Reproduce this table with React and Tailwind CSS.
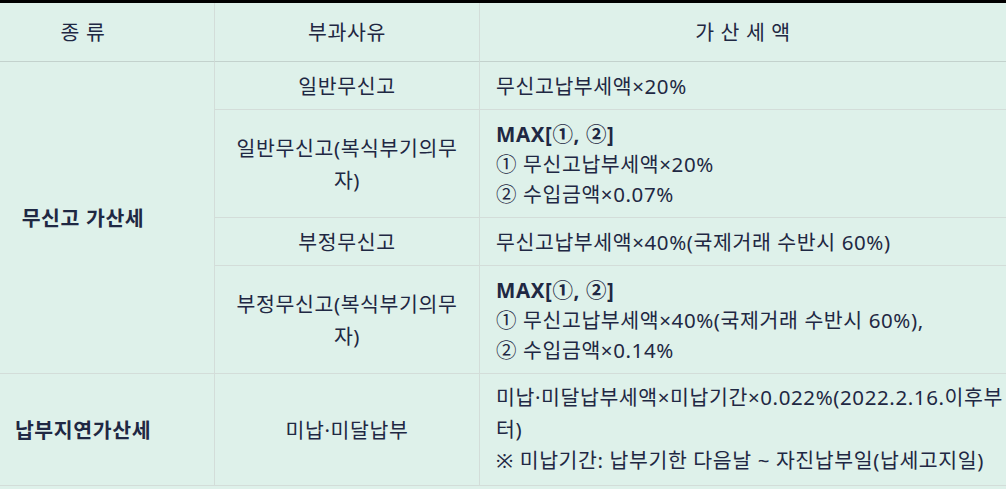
import React from 'react';

const font = { fontFamily: '"Noto Sans", "Noto Sans CJK KR", sans-serif' };

const rows = [
    {
        reason: '일반무신고',
        amount: [{ text: '무신고납부세액×20%' }],
    },
    {
        reason: '일반무신고(복식부기의무자)',
        amount: [
            { text: 'MAX[①, ②]', bold: true },
            { text: '① 무신고납부세액×20%' },
            { text: '② 수입금액×0.07%' },
        ],
    },
    {
        reason: '부정무신고',
        amount: [{ text: '무신고납부세액×40%(국제거래 수반시 60%)' }],
    },
    {
        reason: '부정무신고(복식부기의무자)',
        amount: [
            { text: 'MAX[①, ②]', bold: true },
            { text: '① 무신고납부세액×40%(국제거래 수반시 60%),' },
            { text: '② 수입금액×0.14%' },
        ],
    },
];

const App = () => {
    return (
        <div className="w-[1006px] h-[489px] bg-[#def1ea] text-[#1f2843] overflow-hidden" style={font}>
            <div className="h-[3px] bg-black" />
            <div className="grid grid-cols-[215px_265px_1fr] grid-rows-[59px_48px_108px_48px_108px_112px] text-[20.5px] leading-[30px] tracking-[0.6px]">
                {/* header */}
                <div className="flex items-center justify-center pr-[48px] border-r border-b border-r-[#d3ddd9] border-b-[#c3d2cd]">종 류</div>
                <div className="flex items-center justify-center border-r border-b border-r-[#d3ddd9] border-b-[#c3d2cd]">부과사유</div>
                <div className="flex items-center justify-center border-b border-b-[#c3d2cd]">가 산 세 액</div>

                {/* 무신고 가산세 */}
                <div className="row-span-4 flex items-center justify-center pr-[48px] border-r border-b border-[#d3ddd9] font-bold">
                    무신고 가산세
                </div>
                {rows.map((row) => (
                    <React.Fragment key={row.reason}>
                        <div className="flex items-center justify-center text-center px-5 leading-[32px] border-r border-b border-[#d3ddd9]">
                            {row.reason}
                        </div>
                        <div className="flex flex-col justify-center px-4 border-b border-[#d3ddd9]">
                            {row.amount.map((line) => (
                                <div key={line.text} className={line.bold ? 'font-bold' : ''}>
                                    {line.text}
                                </div>
                            ))}
                        </div>
                    </React.Fragment>
                ))}

                {/* 납부지연가산세 */}
                <div className="flex items-center justify-center pr-[48px] border-r border-b border-[#d3ddd9] font-bold">
                    납부지연가산세
                </div>
                <div className="flex items-center justify-center px-5 border-r border-b border-[#d3ddd9]">
                    미납·미달납부
                </div>
                <div className="flex flex-col justify-center pl-4 leading-[31.5px] border-b border-[#d3ddd9]">
                    <div>미납·미달납부세액×미납기간×0.022%(2022.2.16.이후부터)</div>
                    <div>※ 미납기간: 납부기한 다음날 ~ 자진납부일(납세고지일)</div>
                </div>
            </div>
        </div>
    );
};

export default App;
